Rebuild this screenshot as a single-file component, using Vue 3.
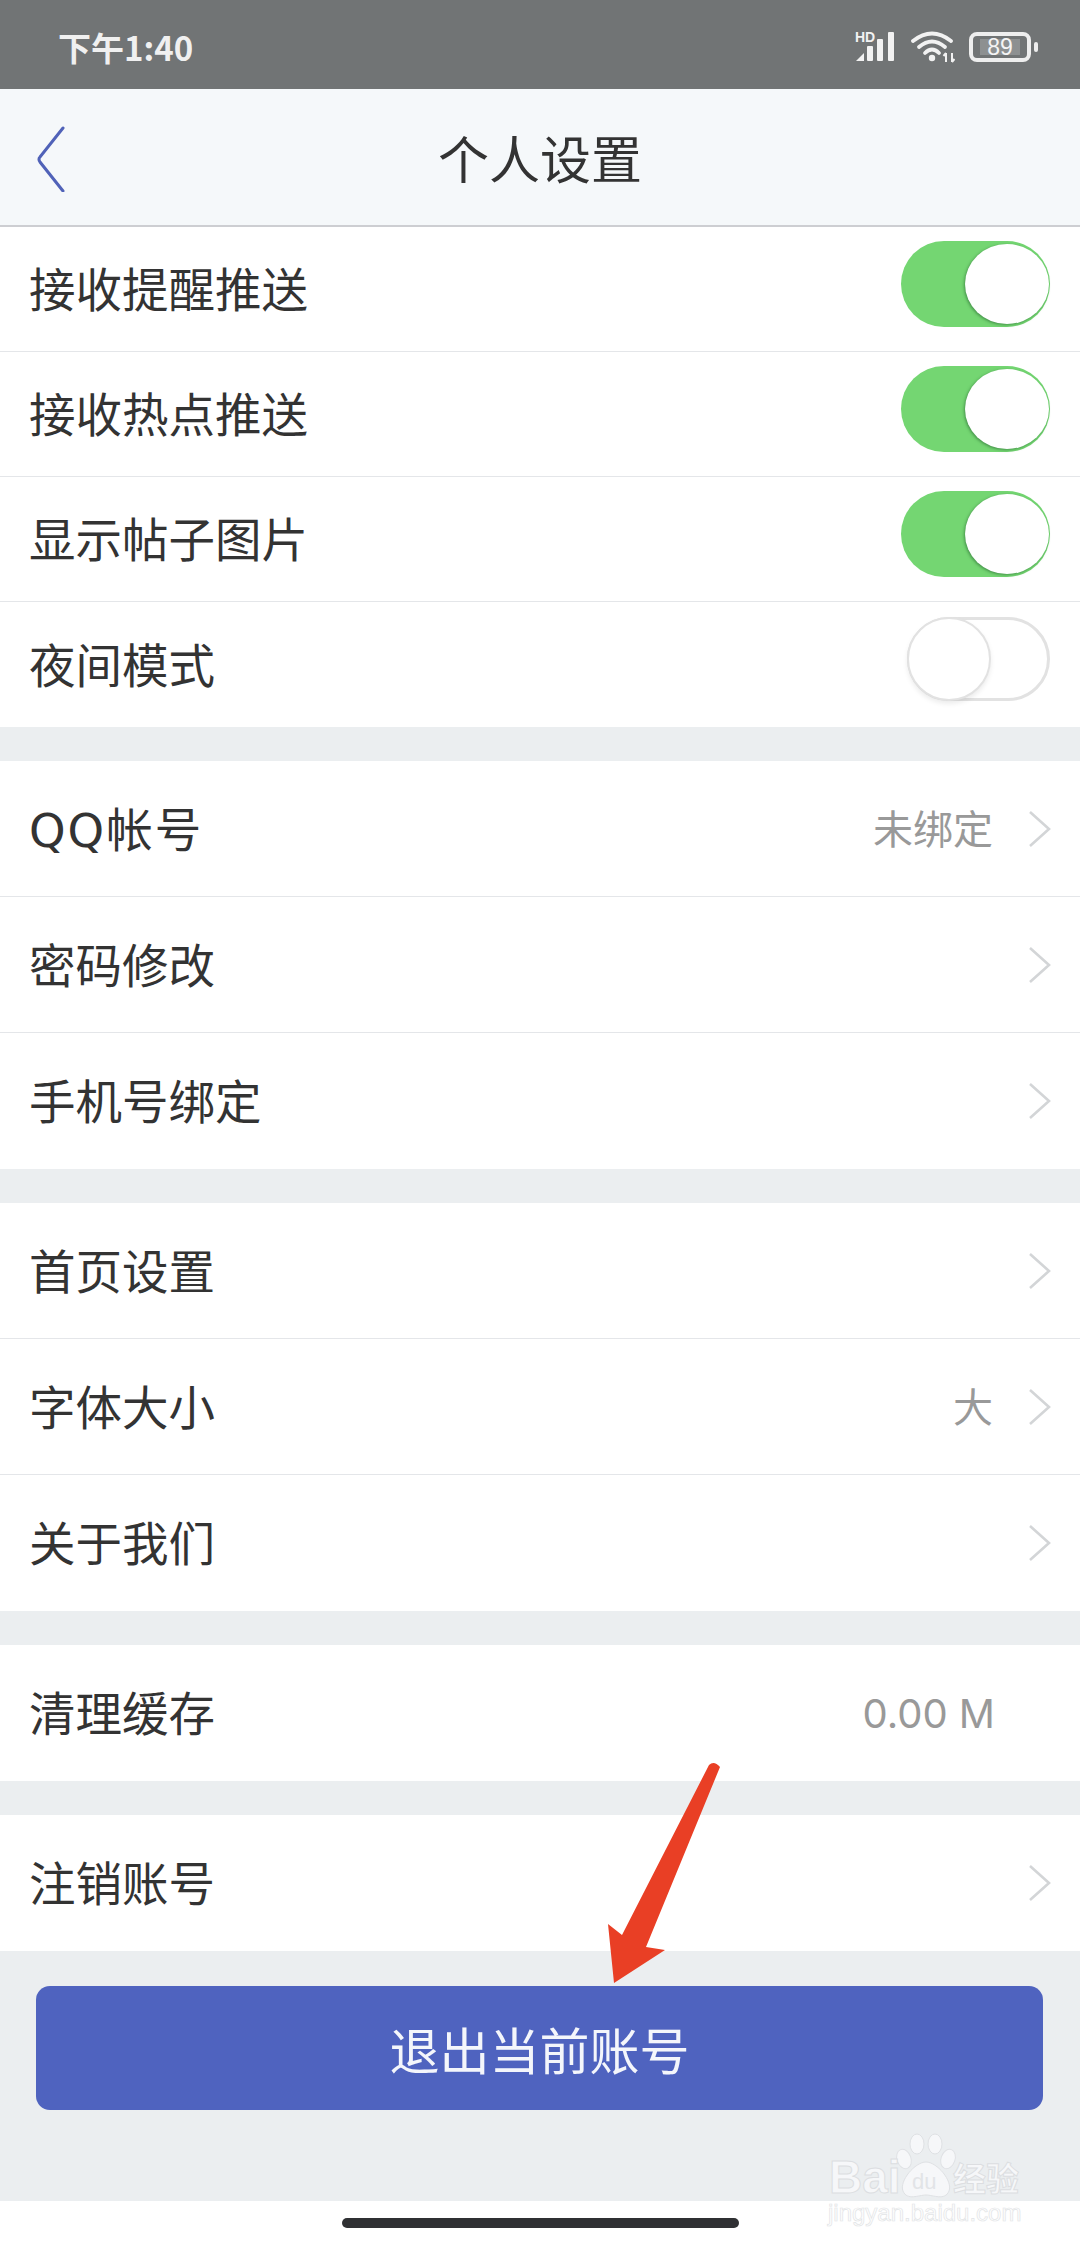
<template>
  <div class="page">
    <div class="status-bar">
      <span class="time">下午1:40</span>
      <div class="status-icons">
        <svg class="signal" width="42" height="40" viewBox="0 -4 42 40">
          <text x="0" y="11" class="hd">HD</text>
          <path d="M1 30 L9 22 V30 Z" fill="#f2f2f2" />
          <rect x="12" y="15" width="6" height="15" rx="1" fill="#f2f2f2" />
          <rect x="22" y="8" width="6" height="22" rx="1" fill="#f2f2f2" />
          <rect x="33" y="1" width="6" height="29" rx="1" fill="#f2f2f2" />
        </svg>
        <svg class="wifi" width="44" height="32" viewBox="0 0 44 32">
          <g fill="none" stroke="#f2f2f2" stroke-width="3.8" stroke-linecap="round">
            <path d="M2 10 Q21 -5 40 10" />
            <path d="M8 16 Q21 5 34 16" />
            <path d="M14 22 Q21 15 28 22" />
          </g>
          <circle cx="21" cy="27" r="3.2" fill="#f2f2f2" />
          <path d="M35 31 V22 M35 22 L32.5 25 M41 22 V31 M41 31 L43.5 28" fill="none" stroke="#f2f2f2" stroke-width="2" />
        </svg>
        <div class="battery">
          <div class="battery-body"><span class="battery-level">89</span></div>
          <div class="battery-nub"></div>
        </div>
      </div>
    </div>

    <header class="nav">
      <svg class="back" width="30" height="66" viewBox="0 0 30 66">
        <path d="M27 2 L4 31 Q2 33 4 36 L27 65" fill="none" stroke="#5062b8" stroke-width="3" stroke-linecap="round" />
      </svg>
      <h1 class="title">个人设置</h1>
    </header>

    <section v-for="(group, i) in groups" :key="i" class="group">
      <div
        v-for="item in group"
        :key="item.label"
        class="row"
        :class="{ 'row-switch': item.toggle !== undefined }"
      >
        <span class="label" :class="{ wide: item.wide }">{{ item.label }}</span>
        <span v-if="item.value" class="value" :class="{ 'no-arrow': item.noArrow }">{{ item.value }}</span>
        <div v-if="item.toggle !== undefined" class="switch" :class="{ on: item.toggle }">
          <span class="knob"></span>
        </div>
        <svg v-else-if="!item.noArrow" class="arrow" width="25" height="38" viewBox="0 0 25 38">
          <path d="M3 2 L22 19 L3 36" fill="none" stroke="#d3d5d7" stroke-width="2.6" />
        </svg>
      </div>
    </section>

    <div class="footer">
      <button class="logout">退出当前账号</button>
    </div>

    <div class="home-area">
      <div class="home-bar"></div>
    </div>

    <!-- red marker pointing at the logout button -->
    <svg class="pointer" width="130" height="235" viewBox="0 0 130 235">
      <path d="M109 10 Q114 5 120 12 L46 192 L65 195 L14 228 L8 169 L22 180 Z" fill="#e93f25" />
    </svg>

    <div class="watermark">
      <svg class="paw" width="62" height="66" viewBox="0 0 62 66">
        <g fill="#f6f7f9" stroke="#dfe1e4" stroke-width="1">
          <ellipse cx="9" cy="26" rx="7" ry="10" transform="rotate(-20 9 26)" />
          <ellipse cx="22" cy="11" rx="7" ry="10" />
          <ellipse cx="40" cy="11" rx="7" ry="10" />
          <ellipse cx="53" cy="26" rx="7" ry="10" transform="rotate(20 53 26)" />
          <path d="M31 29 C42 29 58 48 54 58 C50 68 38 62 31 62 C24 62 12 68 8 58 C4 48 20 29 31 29 Z" />
        </g>
      </svg>
      <span class="wm-ba">Bai</span>
      <span class="wm-du">du</span>
      <span class="wm-cn">经验</span>
      <span class="wm-url">jingyan.baidu.com</span>
    </div>
  </div>
</template>

<script setup>
const groups = [
  [
    { label: "接收提醒推送", toggle: true },
    { label: "接收热点推送", toggle: true },
    { label: "显示帖子图片", toggle: true },
    { label: "夜间模式", toggle: false },
  ],
  [
    { label: "QQ帐号", value: "未绑定", wide: true },
    { label: "密码修改" },
    { label: "手机号绑定" },
  ],
  [
    { label: "首页设置" },
    { label: "字体大小", value: "大" },
    { label: "关于我们" },
  ],
  [{ label: "清理缓存", value: "0.00 M", noArrow: true }],
  [{ label: "注销账号" }],
];
</script>

<style>
html,
body {
  margin: 0;
  background: #fff;
}
</style>

<style scoped>
.page {
  position: relative;
  width: 1080px;
  height: 2248px;
  overflow: hidden;
  background: #fff;
  font-family: "Noto Sans CJK SC", "Liberation Sans", sans-serif;
  color: #333;
}

.status-bar {
  height: 89px;
  box-sizing: border-box;
  padding: 5px 42px 0 58px;
  display: flex;
  align-items: center;
  justify-content: space-between;
  background: #717475;
}

.time {
  font-size: 33px;
  font-weight: 700;
  color: #f0f0f0;
}

.status-icons {
  display: flex;
  align-items: center;
  gap: 14px;
}

.hd {
  font-family: "Liberation Sans", sans-serif;
  font-size: 14px;
  font-weight: 700;
  fill: #f2f2f2;
}

.battery {
  display: flex;
  align-items: center;
  gap: 3px;
}

.battery-body {
  width: 62px;
  height: 30px;
  box-sizing: border-box;
  border: 4px solid #eee;
  border-radius: 8px;
  padding: 3px 7px;
  display: flex;
}

.battery-level {
  flex: 1;
  background: #8d9091;
  color: #f4f4f4;
  font-family: "Liberation Sans", sans-serif;
  font-size: 23px;
  line-height: 16px;
  text-align: center;
}

.battery-nub {
  width: 4px;
  height: 10px;
  border-radius: 2px;
  background: #eee;
}

.nav {
  height: 138px;
  box-sizing: border-box;
  position: relative;
  display: flex;
  align-items: center;
  justify-content: center;
  background: #f5f8fa;
  border-bottom: 2px solid #cdced2;
}

.back {
  position: absolute;
  left: 36px;
  top: 37px;
}

.title {
  margin: 0;
  font-size: 51px;
  font-weight: 400;
  line-height: 1;
  color: #333;
}

.group {
  background: #fff;
}

.group + .group {
  border-top: 34px solid #ebeef0;
}

.row {
  height: 136px;
  box-sizing: border-box;
  padding: 0 28px 0 29px;
  display: flex;
  align-items: center;
  border-bottom: 1px solid #e4e6e9;
}

.row:last-child {
  border-bottom: none;
}

.row-switch {
  height: 125px;
  padding-right: 30px;
}

.label {
  flex: 1;
  margin-top: 5px;
  font-family: "DejaVu Sans", "Noto Sans CJK SC", sans-serif;
  font-size: 46.5px;
  line-height: 1;
  color: #333;
}

.label.wide {
  letter-spacing: 2px;
}

.value {
  margin-top: 2px;
  margin-right: 34px;
  font-family: "Inter", "Noto Sans CJK SC", sans-serif;
  font-size: 40px;
  line-height: 1;
  color: #999;
}

.value.no-arrow {
  margin-right: 57px;
}

.switch {
  position: relative;
  width: 143px;
  height: 84px;
  margin-top: -12px;
  box-sizing: border-box;
  border: 3px solid #e2e2e2;
  border-radius: 42px;
  background: #fff;
}

.knob {
  position: absolute;
  left: -3px;
  top: -3px;
  width: 84px;
  height: 84px;
  box-sizing: border-box;
  border: 2px solid #e2e2e2;
  border-radius: 50%;
  background: #fff;
  box-shadow: 0 3px 5px rgba(0, 0, 0, 0.08);
}

.switch.on {
  width: 149px;
  height: 86px;
  margin-top: -10px;
  border: none;
  border-radius: 43px;
  background: #74d672;
}

.switch.on .knob {
  left: auto;
  right: 1px;
  top: 3px;
  width: 84px;
  height: 80px;
  border: none;
  box-shadow: -1px 1px 3px rgba(30, 90, 40, 0.55);
}

.footer {
  height: 250px;
  box-sizing: border-box;
  padding: 35px 37px 0 36px;
  background: #ebeef0;
}

.logout {
  display: block;
  width: 100%;
  height: 124px;
  border: none;
  border-radius: 14px;
  background: #4f63bf;
  color: #f4f6fb;
  font-family: inherit;
  font-size: 50px;
  line-height: 1;
}

.home-area {
  height: 47px;
  box-sizing: border-box;
  padding-top: 17px;
  display: flex;
  justify-content: center;
  background: #fff;
}

.home-bar {
  width: 397px;
  height: 10px;
  border-radius: 5px;
  background: #2f3033;
}

.pointer {
  position: absolute;
  left: 600px;
  top: 1755px;
}

.watermark {
  position: absolute;
  left: 828px;
  top: 2133px;
  width: 200px;
  height: 92px;
  color: #f6f7f9;
  font-family: "Liberation Sans", sans-serif;
}

.paw {
  position: absolute;
  left: 67px;
  top: 0;
}

.wm-ba,
.wm-du,
.wm-cn,
.wm-url {
  position: absolute;
  -webkit-text-stroke: 1px #dcdee1;
}

.wm-ba {
  left: 1px;
  top: 26px;
  font-size: 46px;
  font-weight: 700;
  line-height: 36px;
}

.wm-du {
  left: 84px;
  top: 38px;
  font-size: 22px;
  line-height: 22px;
  color: #e2e4e7;
  -webkit-text-stroke: 0;
}

.wm-cn {
  left: 125px;
  top: 26px;
  font-family: "Noto Sans CJK SC", sans-serif;
  font-size: 33px;
  font-weight: 700;
  line-height: 36px;
}

.wm-url {
  left: 0;
  top: 68px;
  font-size: 24px;
  line-height: 24px;
  color: #fff;
  -webkit-text-stroke: 0.7px #e2e4e6;
}
</style>
